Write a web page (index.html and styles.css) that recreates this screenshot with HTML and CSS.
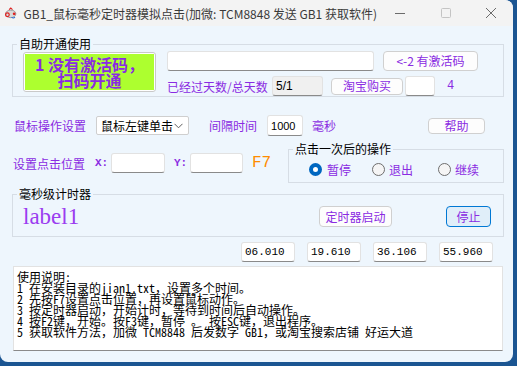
FILE: index.html
```html
<!DOCTYPE html>
<html lang="zh-CN">
<head>
    <meta charset="UTF-8" />
    <title>GB1_鼠标毫秒定时器模拟点击</title>
    <link rel="stylesheet" href="styles.css">
</head>
<body>
    <div class="window">
        <div class="titlebar">
            <svg class="app-icon" viewBox="0 0 16 14" width="16" height="14">
                <ellipse cx="8" cy="8" rx="6" ry="4.5" fill="#d9d9d9" stroke="#8c8c8c" stroke-width="1"/>
                <circle cx="4" cy="9" r="2.2" fill="none" stroke="#e02020" stroke-width="1.4"/>
                <circle cx="12" cy="8" r="1.6" fill="#e02020"/>
                <path d="M9 12 q2 2 4 0" fill="none" stroke="#2b6fd6" stroke-width="1.2"/>
                <path d="M6 3 l2 -2 l2 2" fill="none" stroke="#e02020" stroke-width="1.2"/>
            </svg>
            <span class="title">GB1_鼠标毫秒定时器模拟点击(加微: TCM8848 发送 GB1 获取软件)</span>
            <div class="controls">
                <span class="ctl"><svg width="10" height="10" viewBox="0 0 10 10"><path d="M0 5.5 H10" stroke="#6b6b6b" stroke-width="1"/></svg></span>
                <span class="ctl"><svg width="10" height="10" viewBox="0 0 10 10"><rect x="0.5" y="0.5" width="9" height="9" rx="1" fill="none" stroke="#c4c4c4" stroke-width="1"/></svg></span>
                <span class="ctl ctl-close"><svg width="10" height="10" viewBox="0 0 10 10"><path d="M0 0 L10 10 M10 0 L0 10" stroke="#6b6b6b" stroke-width="1"/></svg></span>
            </div>
        </div>

        <div class="client">
            <fieldset class="group group-activate">
                <legend>自助开通使用</legend>
                <div class="activate">
                    <div class="qr-box"><div class="qr-inner">1 没有激活码，<br>扫码开通</div></div>
                    <div class="activate-right">
                        <div class="act-row">
                            <input class="tb tb-code" type="text" value="">
                            <button class="btn btn-code">&lt;-2 有激活码</button>
                        </div>
                        <div class="act-row">
                            <span class="lbl lbl-days">已经过天数/总天数</span>
                            <input class="tb tb-days" type="text" value="5/1" disabled>
                            <button class="btn btn-buy">淘宝购买</button>
                            <input class="tb tb-small" type="text" value="">
                            <span class="num">4</span>
                        </div>
                    </div>
                </div>
            </fieldset>

            <div class="row row-mouse">
                <span class="lbl lbl-mouse">鼠标操作设置</span>
                <div class="select">
                    <span>鼠标左键单击</span>
                    <svg width="9" height="6" viewBox="0 0 9 6"><path d="M0.5 0.8 L4.5 4.8 L8.5 0.8" fill="none" stroke="#606060" stroke-width="1"/></svg>
                </div>
                <span class="lbl lbl-interval">间隔时间</span>
                <input class="tb tb-interval" type="text" value="1000">
                <span class="lbl lbl-ms">毫秒</span>
                <button class="btn btn-help">帮助</button>
            </div>

            <div class="row-pos">
                <div class="pos">
                    <span class="lbl lbl-pos">设置点击位置</span>
                    <span class="axis">X:</span>
                    <input class="tb tb-x" type="text" value="">
                    <span class="axis">Y:</span>
                    <input class="tb tb-y" type="text" value="">
                    <span class="hotkey">F7</span>
                </div>
                <fieldset class="group group-after">
                    <legend>点击一次后的操作</legend>
                    <div class="radios">
                        <label class="radio"><span class="dot dot-on"></span>暂停</label>
                        <label class="radio radio-exit"><span class="dot"></span>退出</label>
                        <label class="radio radio-cont"><span class="dot"></span>继续</label>
                    </div>
                </fieldset>
            </div>

            <fieldset class="group group-timer">
                <legend>毫秒级计时器</legend>
                <div class="timer">
                    <span class="label1">label1</span>
                    <button class="btn btn-start">定时器启动</button>
                    <button class="btn btn-stop">停止</button>
                </div>
            </fieldset>

            <div class="times">
                <input class="tb tb-time" type="text" value="06.010">
                <input class="tb tb-time" type="text" value="19.610">
                <input class="tb tb-time" type="text" value="36.106">
                <input class="tb tb-time" type="text" value="55.960">
            </div>

            <div class="notes">
                <div>使用说明:</div>
                <div>1 在安装目录的jian1.txt，设置多个时间。</div>
                <div>2 先按F7设置点击位置，再设置鼠标动作。</div>
                <div>3 按定时器启动，开始计时，等待到时间后自动操作。</div>
                <div>4 按F2键，开始。按F3键，暂停 。 按ESC键，退出程序。</div>
                <div>5 获取软件方法，加微 TCM8848 后发数字 GB1，或淘宝搜索店铺 好运大道</div>
            </div>
        </div>
    </div>
</body>
</html>
```

FILE: styles.css
```css
body {
    margin: 0;
    background: #1b5592;
    font-family: "Noto Sans CJK SC", sans-serif;
    font-size: 12px;
}

.window {
    width: 513px;
    height: 362px;
    background: #eef6fd;
    border-radius: 0 8px 8px 8px;
    overflow: hidden;
}

.titlebar {
    height: 26px;
    background: #f3f3f3;
    display: flex;
    align-items: center;
}

.app-icon {
    margin-left: 4px;
}

.title {
    margin-left: 6px;
    flex: 1;
    color: #3a3a3a;
    font-size: 12px;
    white-space: nowrap;
}

.controls {
    display: flex;
}

.ctl {
    width: 46px;
    display: flex;
    justify-content: center;
}

.ctl-close {
    width: 44px;
}

.client {
    padding: 0 9px 0 12px;
}

/* group boxes */
.group {
    margin: 0;
    padding: 0;
    border: 1px solid #d6dde5;
    min-width: 0;
}

.group legend {
    margin-left: 4px;
    padding: 0 2px;
    line-height: 14px;
    font-size: 12px;
    color: #000;
}

.group-activate {
    margin-top: 11px;
}

.activate {
    display: flex;
    padding-left: 10px;
}

.qr-box {
    width: 133px;
    height: 40px;
    margin-top: 1px;
    box-sizing: border-box;
    border: 1px solid #c9c9c9;
    border-radius: 3px;
    padding: 1px;
    background: #fff;
}

.qr-inner {
    height: 100%;
    background: #adff2f;
    color: #8a2be2;
    font-weight: bold;
    font-size: 16px;
    line-height: 16px;
    text-align: center;
    padding-top: 2px;
    box-sizing: border-box;
}

.activate-right {
    margin-left: 11px;
}

.act-row {
    display: flex;
    align-items: center;
    height: 20px;
}

.act-row + .act-row {
    margin-top: 5px;
}

.lbl {
    color: #8a2be2;
    white-space: nowrap;
}

/* text boxes and buttons */
.tb {
    box-sizing: border-box;
    height: 20px;
    margin: 0;
    padding: 0 3px;
    background: #fff;
    border: 1px solid #e2e2e2;
    border-bottom-color: #8a8a8a;
    border-radius: 3px;
    font-family: "Liberation Sans", sans-serif;
    font-size: 12px;
    color: #000;
    outline: none;
}

.tb:disabled {
    background: #f0f0f0;
    color: #000;
}

.btn {
    box-sizing: border-box;
    margin: 0;
    padding: 0;
    background: #fdfdfd;
    border: 1px solid #d0d0d0;
    border-radius: 4px;
    color: #8a2be2;
    font-family: "Noto Sans CJK SC", sans-serif;
    font-size: 12px;
    line-height: 1;
}

.tb-code {
    width: 207px;
}

.btn-code {
    width: 95px;
    height: 20px;
    margin-left: 9px;
}

.lbl-days {
    width: 105px;
}

.tb-days {
    width: 51px;
}

.btn-buy {
    width: 72px;
    height: 17px;
    margin-left: 8px;
}

.tb-small {
    width: 30px;
    margin-left: 2px;
}

.num {
    margin-left: 12px;
    color: #8a2be2;
    font-family: "Liberation Mono", monospace;
}

/* mouse row */
.row {
    display: flex;
    align-items: center;
}

.row-mouse {
    height: 21px;
    margin-top: 18px;
}

.lbl-mouse {
    margin-left: 2px;
    width: 72px;
}

.select {
    box-sizing: border-box;
    width: 93px;
    height: 19px;
    margin-left: 10px;
    padding: 0 5px 0 4px;
    display: flex;
    align-items: center;
    justify-content: space-between;
    background: #fff;
    border: 1px solid #cfcfcf;
    border-radius: 2px;
    color: #000;
}

.lbl-interval {
    margin-left: 20px;
}

.tb-interval {
    width: 36px;
    height: 21px;
    margin-left: 10px;
    font-size: 11px;
}

.lbl-ms {
    margin-left: 9px;
}

.btn-help {
    width: 57px;
    height: 16px;
    margin-left: 92px;
}

/* position row */
.row-pos {
    display: flex;
    margin-top: 6px;
}

.pos {
    width: 276px;
    height: 20px;
    margin-top: 11px;
    display: flex;
    align-items: center;
}

.lbl-pos {
    margin-left: 1px;
    width: 82px;
}

.axis {
    width: 16px;
    color: #8a2be2;
    font-family: "Liberation Mono", monospace;
    font-size: 11px;
    font-weight: bold;
}

.tb-x {
    width: 54px;
    margin-right: 9px;
}

.tb-y {
    width: 53px;
    margin-right: 9px;
}

.hotkey {
    color: #ff8c00;
    font-family: "Liberation Mono", monospace;
    font-size: 16px;
}

.group-after {
    width: 216px;
    box-sizing: border-box;
}

.radios {
    display: flex;
    align-items: center;
    height: 14px;
    margin-top: 6px;
    padding: 0 0 6px 20px;
}

.radio {
    display: flex;
    align-items: center;
    color: #8a2be2;
}

.dot {
    box-sizing: border-box;
    width: 13px;
    height: 13px;
    margin-right: 5px;
    border-radius: 50%;
    border: 1px solid #6e6e6e;
    background: #f5f5f5;
}

.dot-on {
    border: 4px solid #0067c0;
    background: #fff;
}

.radio-exit {
    margin-left: 21px;
}

.radio-exit .dot,
.radio-cont .dot {
    margin-right: 4px;
}

.radio-cont {
    margin-left: 25px;
}

/* timer */
.group-timer {
    margin-top: 4px;
}

.timer {
    display: flex;
    align-items: center;
    height: 21px;
    margin-top: 5px;
    padding: 0 0 9px 10px;
}

.label1 {
    width: 296px;
    color: #9b3df0;
    font-family: "Liberation Serif", serif;
    font-size: 23px;
    line-height: 21px;
}

.btn-start {
    width: 73px;
    height: 21px;
}

.btn-stop {
    width: 45px;
    height: 21px;
    margin-left: 54px;
    background: #e0eef9;
    border-color: #0078d4;
}

.times {
    display: flex;
    justify-content: flex-end;
    gap: 12px;
    margin-top: 5px;
    padding-right: 11px;
}

.tb-time {
    width: 54px;
    font-family: "Liberation Mono", monospace;
    font-size: 11px;
}

.notes {
    box-sizing: border-box;
    width: 490px;
    height: 85px;
    margin: 4px 0 0 1px;
    padding: 4px 3px;
    background: #fff;
    border: 1px solid #e2e2e2;
    border-bottom-color: #8a8a8a;
    font-family: "Noto Sans Mono CJK SC", "Liberation Mono", "Noto Sans CJK SC", monospace;
    font-size: 12px;
    line-height: 11px;
    color: #000;
}

.notes div {
    white-space: pre;
}
```
